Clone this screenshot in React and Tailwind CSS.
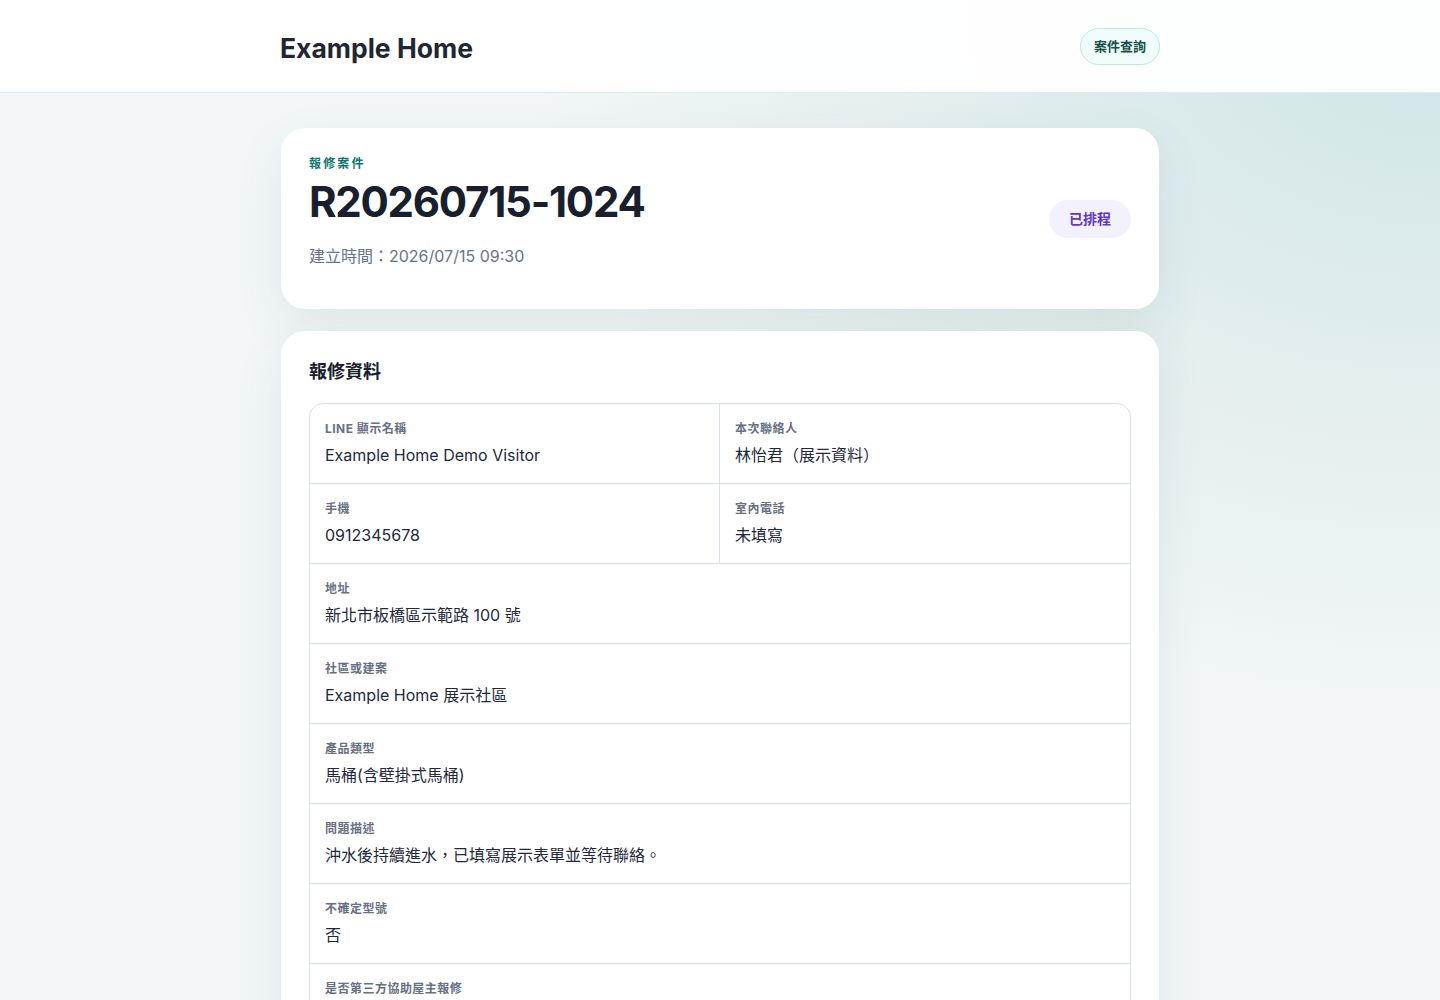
import React from "react";

const font = "font-['Inter','Noto_Sans_CJK_TC','Noto_Sans',sans-serif]";

function Cell({ label, value, className = "" }) {
  return (
    <div className={`px-[15px] pt-4 pb-4 ${className}`}>
      <div className="text-[12px] leading-[18px] font-bold text-[#667085] tracking-[0.04em]">{label}</div>
      <div className="mt-[5px] text-[16px] leading-6 text-[#1e293b]">{value}</div>
    </div>
  );
}

export default function App() {
  const rows = [
    ["地址", "新北市板橋區示範路 100 號"],
    ["社區或建案", "Example Home 展示社區"],
    ["產品類型", "馬桶(含壁掛式馬桶)"],
    ["問題描述", "沖水後持續進水，已填寫展示表單並等待聯絡。"],
    ["不確定型號", "否"],
    ["是否第三方協助屋主報修", "否"],
  ];
  return (
    <div
      className={`${font} min-h-screen bg-[#f2f6f7] bg-[radial-gradient(ellipse_at_100%_0%,rgba(196,222,222,0.75),rgba(242,246,247,0)_45%)] text-[#1e293b]`}
    >
      <header className="h-[93px] bg-white/95 border-b border-[#e3eaed]">
        <div className="w-[880px] mx-auto h-[92px] flex items-center justify-between">
          <h1 className="text-[26.5px] leading-8 font-bold text-[#1e2733] mt-[4px]">Example Home</h1>
          <button className="h-[37px] px-[13px] rounded-full border border-[#aef0e0] bg-[#f1fdfa] text-[13px] font-bold text-[#134e4a] mt-[1px]">
            案件查詢
          </button>
        </div>
      </header>

      <main className="w-[878px] mx-auto pt-[35px] pb-10 flex flex-col gap-[22px]">
        <section className="rounded-[24px] bg-white shadow-[0_18px_50px_rgba(40,90,100,0.09)] pl-7 pr-7 pt-7 pb-[41px] flex items-center justify-between">
          <div>
            <div className="text-[12px] leading-4 font-bold text-[#0f766e] tracking-[0.18em]">報修案件</div>
            <div className="mt-[6px] text-[42px] leading-[48px] font-bold text-[#17202c] tracking-[-0.03em]">R20260715-1024</div>
            <div className="mt-[18px] text-[16px] leading-6 text-[#64748b]">建立時間：2026/07/15 09:30</div>
          </div>
          <span className="mt-[13px] rounded-full bg-[#f4f1ff] px-5 py-[9px] text-[14px] leading-5 font-bold text-[#6236c9]">已排程</span>
        </section>

        <section className="rounded-[24px] bg-white shadow-[0_18px_50px_rgba(40,90,100,0.09)] p-7">
          <h2 className="text-[18px] leading-6 font-bold text-[#17202c] mt-[1px] -mb-[1px]">報修資料</h2>
          <div className="mt-5 rounded-[14px] border border-[#d8e1e8] overflow-hidden">
            <div className="grid grid-cols-2 border-b border-[#d8e1e8]">
              <Cell label="LINE 顯示名稱" value="Example Home Demo Visitor" className="border-r border-[#d8e1e8]" />
              <Cell label="本次聯絡人" value="林怡君（展示資料）" />
            </div>
            <div className="grid grid-cols-2 border-b border-[#d8e1e8]">
              <Cell label="手機" value="0912345678" className="border-r border-[#d8e1e8]" />
              <Cell label="室內電話" value="未填寫" />
            </div>
            {rows.map(([l, v], i) => (
              <div key={l} className={i < rows.length - 1 ? "border-b border-[#d8e1e8]" : ""}>
                <Cell label={l} value={v} />
              </div>
            ))}
          </div>
        </section>
      </main>
    </div>
  );
}
